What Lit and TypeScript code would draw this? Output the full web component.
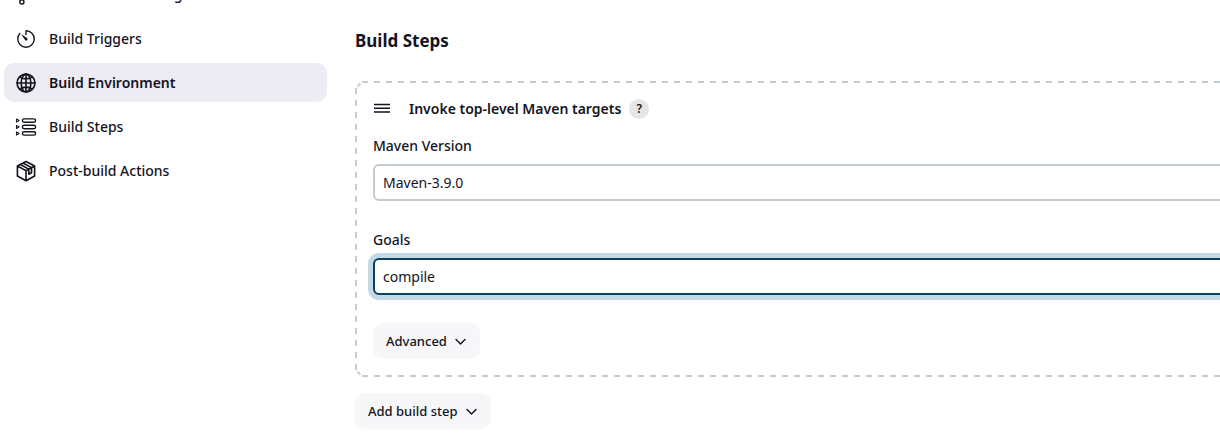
import { LitElement, html, css, svg } from "lit";
import { customElement, property, state } from "lit/decorators.js";
import { classMap } from "lit/directives/class-map.js";

const icons = {
  source: svg`
    <circle cx="160" cy="96" r="48" /><circle cx="160" cy="416" r="48" /><circle cx="352" cy="160" r="48" />
    <path d="M160 368V144M352 208c0 128-192 48-192 160" />`,
  timer: svg`
    <path d="M112.91 128A191.85 191.85 0 0064 254c-1.18 106.35 85.65 193.8 192 194.2 106.2.2 192-85.62 192-192.2 0-104.54-83.55-189.61-187.5-192a4.36 4.36 0 00-4.5 4.37V152" />
    <path class="solid" d="M233.38 278.63l-79-113a8.13 8.13 0 0111.32-11.32l113 79a32.5 32.5 0 01-37.25 53.26 33.21 33.21 0 01-8.07-7.94z" />`,
  globe: svg`
    <g class="bold"><circle cx="256" cy="256" r="208" />
    <path d="M256 48c-58.07 0-112.67 93.13-112.67 208S197.93 464 256 464s112.67-93.13 112.67-208S314.07 48 256 48z" />
    <path d="M117.33 117.33c38.24 27.15 86.38 43.34 138.67 43.34s100.43-16.19 138.67-43.34M394.67 394.67c-38.24-27.15-86.38-43.34-138.67-43.34s-100.43 16.19-138.67 43.34M256 48v416M464 256H48" /></g>`,
  steps: svg`
    <rect x="172" y="66" width="308" height="80" rx="40" /><rect x="172" y="216" width="308" height="80" rx="40" /><rect x="172" y="366" width="308" height="80" rx="40" />
    <g class="thin"><path d="M34 70l62 36-62 36zM34 220l62 36-62 36zM34 370l62 36-62 36z" /></g>`,
  parcel: svg`
    <g class="bold"><path d="M256 36L456 140V372L256 482L56 372V140ZM56 140L256 248L456 140M256 248V482M122 104L322 212V330L384 296V178L186 70" /></g>`,
};

@customElement("side-nav")
class SideNav extends LitElement {
  @state() private current = 2;

  private items = [
    { label: "Source Code Management", icon: icons.source },
    { label: "Build Triggers", icon: icons.timer },
    { label: "Build Environment", icon: icons.globe },
    { label: "Build Steps", icon: icons.steps },
    { label: "Post-build Actions", icon: icons.parcel },
  ];

  static styles = css`
    :host { display: block; }
    nav { display: flex; flex-direction: column; gap: 5px; }
    a {
      display: flex; align-items: center; gap: 12px;
      height: 39px; padding: 0 11px; border-radius: 10px;
      color: #14141f; text-decoration: none; font-weight: 500;
    }
    a.current { background: #ececf2; font-weight: 600; }
    svg {
      flex: none; width: 22px; height: 22px; fill: none; stroke: currentColor;
      stroke-width: 32; stroke-linecap: round; stroke-linejoin: round;
    }
    .solid { fill: currentColor; stroke: none; }
    .thin { stroke-width: 24; }
    .bold { stroke-width: 38; }
  `;

  render() {
    return html`<nav>
      ${this.items.map(
        (item, i) => html`<a
          href="#section-${i}"
          class=${classMap({ current: i === this.current })}
          @click=${() => (this.current = i)}
          ><svg viewBox="0 0 512 512" aria-hidden="true">${item.icon}</svg>${item.label}</a>`
      )}
    </nav>`;
  }
}

@customElement("menu-button")
class MenuButton extends LitElement {
  @property() label = "";

  static styles = css`
    :host { display: block; }
    button {
      display: flex; align-items: center; gap: 7px;
      height: 36px; padding: 0 13px; border: 0; border-radius: 10px;
      background: #f7f7f9; color: #14141f; font: inherit; font-size: 13px; font-weight: 500;
      cursor: pointer;
    }
    svg { width: 13px; height: 13px; fill: none; stroke: currentColor; stroke-width: 56; stroke-linecap: round; stroke-linejoin: round; }
  `;

  render() {
    return html`<button type="button">
      ${this.label}<svg viewBox="0 0 512 512" aria-hidden="true"><path d="M80 176l176 176 176-176" /></svg>
    </button>`;
  }
}

@customElement("app-root")
class AppRoot extends LitElement {
  static styles = css`
    :host {
      display: grid; grid-template-columns: 323px minmax(0, 1fr); column-gap: 28px;
      padding-left: 4px; height: 100vh; overflow: hidden; box-sizing: border-box;
      background: #fff; color: #14141f;
      font-family: "Noto Sans", "Open Sans", sans-serif; font-size: 14px; line-height: 20px;
    }
    side-nav { margin-top: -25px; }
    main { padding-top: 29px; margin-right: -24px; }
    h2 { margin: 0 0 28px; font-size: 17px; line-height: 24px; font-weight: 700; }
    .step { position: relative; padding: 18px; margin-bottom: 16px; }
    .outline {
      position: absolute; inset: 0; width: 100%; height: 100%;
      fill: none; stroke: #c3ccd1; stroke-width: 2; pointer-events: none;
    }
    .outline line { stroke-dasharray: 6 6; }
    .outline svg { overflow: visible; }
    .head { display: flex; align-items: center; margin-bottom: 17px; }
    .grip { width: 18px; height: 18px; margin-right: 18px; stroke: currentColor; cursor: move; }
    h3 { margin: 0; font-size: 14px; line-height: 20px; font-weight: 600; }
    .help {
      width: 20px; height: 20px; margin-left: 8px; padding: 0; border: 0; border-radius: 50%;
      background: #e6e6e6; color: inherit; font: inherit; font-size: 12px; font-weight: 600;
    }
    label { display: block; margin-bottom: 8px; font-weight: 500; }
    select, input {
      display: block; appearance: none; box-sizing: border-box; width: 100%; height: 37px;
      margin: 0 0 29px; padding: 0 8px; border: 2px solid #c3ccd1; border-radius: 6px;
      background: #fff; color: inherit; font: inherit; outline: none;
    }
    input { margin-bottom: 28px; border-color: #0b4262; box-shadow: 0 0 0 5px #c2d9e6; }
  `;

  render() {
    return html`
      <side-nav></side-nav>
      <main>
        <h2>Build Steps</h2>
        <section class="step">
          <svg class="outline" aria-hidden="true">
            <line x1="7" y1="1" x2="99%" y2="1" />
            <line x1="1" y1="7" x2="1" y2="98%" />
            <path d="M2.5 5.5A10 10 0 0 1 5.5 2.5" />
            <svg y="100%">
              <line x1="7" y1="-1" x2="99%" y2="-1" />
              <path d="M2.5 -5.5A10 10 0 0 0 5.5 -2.5" />
            </svg>
            <svg x="100%"><line x1="-1" y1="7" x2="-1" y2="98%" /></svg>
          </svg>
          <div class="head">
            <svg class="grip" viewBox="0 0 18 18" stroke-width="1.6" aria-hidden="true"><path d="M1 4.5h16M1 8.25h16M1 12h16" /></svg>
            <h3>Invoke top-level Maven targets</h3>
            <button class="help" type="button">?</button>
          </div>
          <label for="version">Maven Version</label>
          <select id="version"><option>Maven-3.9.0</option></select>
          <label for="goals">Goals</label>
          <input id="goals" type="text" value="compile" />
          <menu-button label="Advanced"></menu-button>
        </section>
        <menu-button label="Add build step"></menu-button>
      </main>
    `;
  }
}
